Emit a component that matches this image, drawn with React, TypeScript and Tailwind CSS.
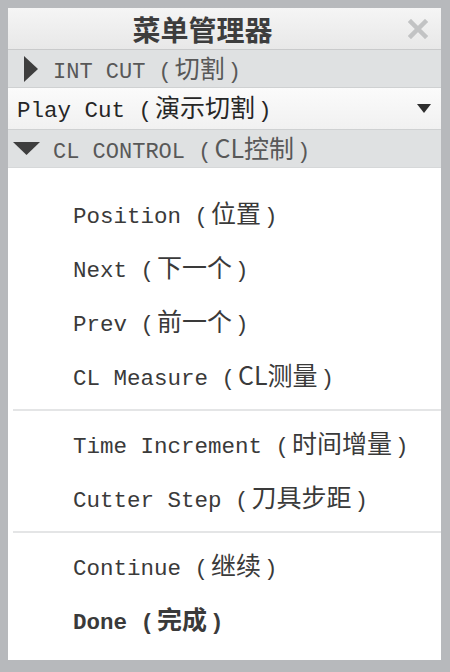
const mono = "font-['Liberation_Mono','Noto_Sans_CJK_SC',monospace]";

function Label({ en, zh, bold = false }: { en: string; zh: string; bold?: boolean }) {
  return (
    <span className={`${mono} whitespace-pre ${bold ? 'font-bold' : ''}`}>
      {en} (
      <span className="font-['Noto_Sans_CJK_SC',sans-serif] text-[25px] mx-[3px]">{zh}</span>)
    </span>
  );
}

function MenuItem({ en, zh, bold }: { en: string; zh: string; bold?: boolean }) {
  return (
    <div className="h-[54px] flex items-center pl-[65px] text-[22.5px] text-[#3a3a3a]">
      <Label en={en} zh={zh} bold={bold} />
    </div>
  );
}

function Separator() {
  return <div className="ml-[5px] h-[2px] bg-[#e4e5e6] my-[6px]" />;
}

export default function App() {
  return (
    <div className="w-[450px] h-[672px] bg-[#b7b9bc] pl-[8px] pt-[8px] pr-[9px] pb-[12px] flex flex-col">
      {/* Title bar */}
      <div className="h-[42px] flex items-center bg-gradient-to-b from-[#f5f5f5] to-[#e8e8e8] border-b border-[#c9cacb]">
        <div className="flex-1 text-center font-['Noto_Sans_CJK_SC',sans-serif] font-bold text-[28px] leading-none text-[#3d3d3d] pr-[4px]">
          菜单管理器
        </div>
        <div className="w-[40px] flex justify-center pr-[6px]">
          <svg width="20" height="20" viewBox="0 0 20 20">
            <path d="M3 3 L17 17 M17 3 L3 17" stroke="#c2c3c4" strokeWidth="4.5" strokeLinecap="square" />
          </svg>
        </div>
      </div>

      {/* INT CUT */}
      <div className="h-[38px] flex items-center bg-[#dfe1e2] border-b border-[#cfd1d2] text-[22px] text-[#585858]">
        <svg width="14" height="26" viewBox="0 0 14 26" className="ml-[16px] mr-[15px]">
          <path d="M0 0 L14 13 L0 26 Z" fill="#3e3e3e" />
        </svg>
        <Label en="INT CUT" zh="切割" />
      </div>

      {/* Play Cut dropdown */}
      <div className="h-[42px] flex items-center justify-between bg-gradient-to-b from-[#fbfbfb] to-[#f1f1f1] border-b border-[#cfd1d2] pl-[9px] pr-[10px] text-[22.5px] text-[#262626]">
        <Label en="Play Cut" zh="演示切割" />
        <svg width="14" height="9" viewBox="0 0 14 9">
          <path d="M0 0 L14 0 L7 9 Z" fill="#2e2e2e" />
        </svg>
      </div>

      {/* CL CONTROL */}
      <div className="h-[38px] flex items-center bg-[#dfe1e2] border-b border-[#d6d8d9] text-[22px] text-[#585858]">
        <svg width="27" height="13" viewBox="0 0 27 13" className="ml-[5px] mr-[13px]">
          <path d="M0 0 L27 0 L13.5 13 Z" fill="#3e3e3e" />
        </svg>
        <Label en="CL CONTROL" zh="CL控制" />
      </div>

      {/* Menu body */}
      <div className="flex-1 bg-white pt-[19px]">
        <MenuItem en="Position" zh="位置" />
        <MenuItem en="Next" zh="下一个" />
        <MenuItem en="Prev" zh="前一个" />
        <MenuItem en="CL Measure" zh="CL测量" />
        <Separator />
        <MenuItem en="Time Increment" zh="时间增量" />
        <MenuItem en="Cutter Step" zh="刀具步距" />
        <Separator />
        <MenuItem en="Continue" zh="继续" />
        <MenuItem en="Done" zh="完成" bold />
      </div>
    </div>
  );
}
